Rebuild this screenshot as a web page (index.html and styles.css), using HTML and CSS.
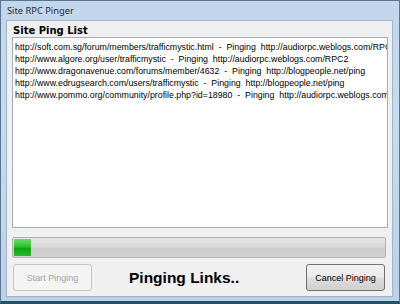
FILE: index.html
```html
<!DOCTYPE html>
<html lang="en">
<head>
    <meta charset="UTF-8">
    <title>Site RPC Pinger</title>
    <link rel="stylesheet" href="styles.css">
</head>
<body>
    <div class="window">
        <div class="titlebar">Site RPC Pinger</div>
        <div class="client">
            <h2 class="list-title">Site Ping List</h2>
            <div class="listbox">
                <div class="item">http://soft.com.sg/forum/members/trafficmystic.html  -  Pinging  http://audiorpc.weblogs.com/RPC2</div>
                <div class="item">http://www.algore.org/user/trafficmystic  -  Pinging  http://audiorpc.weblogs.com/RPC2</div>
                <div class="item">http://www.dragonavenue.com/forums/member/4632  -  Pinging  http://blogpeople.net/ping</div>
                <div class="item">http://www.edrugsearch.com/users/trafficmystic  -  Pinging  http://blogpeople.net/ping</div>
                <div class="item">http://www.pommo.org/community/profile.php?id=18980  -  Pinging  http://audiorpc.weblogs.com/RPC2</div>
            </div>
            <div class="progress">
                <div class="progress-fill" style="width: 17px"></div>
            </div>
            <div class="actions">
                <button class="btn" disabled>Start Pinging</button>
                <span class="status">Pinging Links..</span>
                <button class="btn btn-cancel">Cancel Pinging</button>
            </div>
        </div>
    </div>
</body>
</html>
```

FILE: styles.css
```css
:root {
    --frame-border: #5b7690;
    --client-bg: #f0f0f0;
    --list-border: #828790;
    --text: #000;
}
body {
    margin: 0;
    font-family: "Liberation Sans", Arial, sans-serif;
    color: var(--text);
}
.window {
    width: 400px;
    height: 304px;
    box-sizing: border-box;
    border: 1px solid var(--frame-border);
    border-bottom: 3px solid #1d5466;
    padding: 0 6px 4px 5px;
    background: linear-gradient(180deg, #c2d6ec 0%, #c9dbee 40%, #bcd0e6 100%);
    display: flex;
    flex-direction: column;
}
.titlebar {
    height: 19px;
    line-height: 19px;
    padding-left: 1px;
    font-family: "Noto Sans", sans-serif;
    font-size: 9.3px;
    color: #1e2a36;
}
.client {
    flex: 1;
    background: var(--client-bg);
    border: 1px solid #9fb4c9;
    padding: 0 4px 0 5px;
    display: flex;
    flex-direction: column;
}
.list-title {
    margin: 0;
    padding: 3px 0 0 1px;
    height: 13px;
    line-height: 13px;
    font-family: "DejaVu Sans", sans-serif;
    font-size: 10px;
    font-weight: bold;
}
.listbox {
    height: 191px;
    box-sizing: border-box;
    border: 1px solid var(--list-border);
    border-color: #abadb3 #e3e9ef #e3e9ef #abadb3;
    border: 1px solid #a5acb5;
    background: #fff;
    padding: 3px 0 0 2px;
    overflow: hidden;
}
.item {
    white-space: pre;
    font-size: 8.8px;
    line-height: 12px;
    overflow: hidden;
}
.progress {
    margin: 9px 2px 0 0;
    height: 21px;
    box-sizing: border-box;
    border: 1px solid #b2b2b2;
    border-radius: 2px;
    background: linear-gradient(180deg, #e4e4e4 0%, #dadada 45%, #cdcdcd 55%, #d2d2d2 100%);
    padding: 1px;
}
.progress-fill {
    height: 100%;
    background: linear-gradient(180deg, #6fdc6f 0%, #2bc22b 45%, #0fa60f 55%, #27b927 100%);
}
.actions {
    margin-top: 6px;
    padding: 0 3px 0 1px;
    display: flex;
    align-items: center;
}
.btn {
    width: 79px;
    height: 27px;
    font-family: "Liberation Sans", Arial, sans-serif;
    font-size: 9px;
    color: #000;
    border: 1px solid #707070;
    border-radius: 3px;
    background: linear-gradient(180deg, #f2f2f2 0%, #ebebeb 48%, #dddddd 52%, #cfcfcf 100%);
    padding: 0;
}
.btn:disabled {
    color: #a3a3a3;
    border-color: #c5c5c5;
    background: #f4f4f4;
}
.status {
    margin-left: 37px;
    font-size: 15.5px;
    font-weight: bold;
}
.btn-cancel { margin-left: auto; }
```
